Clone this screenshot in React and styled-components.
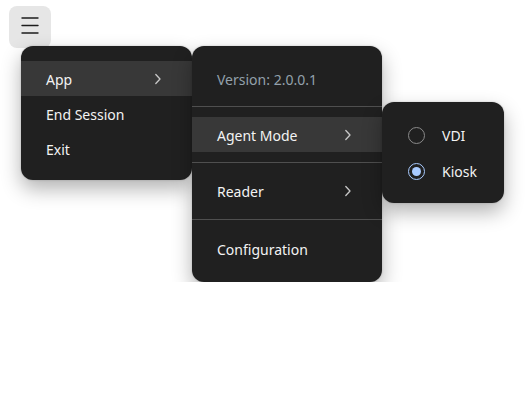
import React from "react";
import styled, { createGlobalStyle } from "styled-components";

const Global = createGlobalStyle`
  html, body { margin: 0; padding: 0; background: #ffffff; }
  body { font-family: "Segoe UI", "Noto Sans", "Open Sans", sans-serif; }
`;

const Page = styled.div`
  padding: 6px 0 0 9px;
  display: flex;
  flex-direction: column;
  align-items: flex-start;
`;

const MenuButton = styled.button`
  width: 42px;
  height: 42px;
  border: none;
  border-radius: 8px;
  background: #e6e6e6;
  display: flex;
  align-items: center;
  justify-content: center;
  padding: 0;
  color: #1a1a1a;
`;

const Cascade = styled.div`
  display: flex;
  align-items: flex-start;
  margin: -2px 0 0 12px;
`;

const Menu = styled.div`
  width: ${(p) => p.$w}px;
  margin-top: ${(p) => p.$top || 0}px;
  background: #202020;
  border-radius: 12px;
  padding: 15px 0 ${(p) => p.$pb || 14}px;
  box-sizing: border-box;
  box-shadow: 0 0 2px rgba(0, 0, 0, 0.22), 0 9px 20px rgba(0, 0, 0, 0.3);
  color: #f3f3f3;
  font-size: 14px;
`;

const Item = styled.div`
  height: ${(p) => p.$h || 35}px;
  box-sizing: border-box;
  padding: 2px 30px 0 25px;
  display: flex;
  align-items: center;
  justify-content: space-between;
  background: ${(p) => (p.$active ? "#383838" : "transparent")};
  color: ${(p) => (p.$muted ? "#93a0ab" : "#f3f3f3")};
  white-space: nowrap;
  svg { margin-top: -2px; }
`;

const Separator = styled.div`
  height: 1px;
  background: #4f4f4f;
  margin: ${(p) => (p.$wide ? "11px 0" : "10px 0")};
`;

const RadioItem = styled.div`
  height: 36px;
  display: flex;
  align-items: center;
  padding-left: 26px;
  gap: 17px;
  color: #f3f3f3;
`;

const Radio = styled.span`
  width: 17px;
  height: 17px;
  box-sizing: border-box;
  border-radius: 50%;
  border: 1.5px solid ${(p) => (p.$checked ? "#a9cbff" : "#8a8a8a")};
  display: flex;
  align-items: center;
  justify-content: center;
  &::after {
    content: "";
    width: 9px;
    height: 9px;
    border-radius: 50%;
    background: ${(p) => (p.$checked ? "#a9cbff" : "transparent")};
  }
`;

const Chevron = () => (
  <svg width="8" height="12" viewBox="0 0 8 12" fill="none">
    <path d="M1.8 1.5 L6 6 L1.8 10.5" stroke="#c8c8c8" strokeWidth="1.3" strokeLinecap="round" strokeLinejoin="round" />
  </svg>
);

const Hamburger = () => (
  <svg width="18" height="20" viewBox="0 0 18 20" fill="none">
    <path d="M1 1 H17 M1 8.5 H17 M1 16 H17" stroke="#1c1c1c" strokeWidth="1.4" strokeLinecap="round" />
  </svg>
);

export default function App() {
  return (
    <>
      <Global />
      <Page>
        <MenuButton aria-label="Menu">
          <Hamburger />
        </MenuButton>
        <Cascade>
          <Menu $w={171}>
            <Item $active>
              App <Chevron />
            </Item>
            <Item>End Session</Item>
            <Item>Exit</Item>
          </Menu>
          <Menu $w={190} $pb={16}>
            <Item $muted>Version: 2.0.0.1</Item>
            <Separator />
            <Item $active>
              Agent Mode <Chevron />
            </Item>
            <Separator />
            <Item>
              Reader <Chevron />
            </Item>
            <Separator $wide />
            <Item>Configuration</Item>
          </Menu>
          <Menu $w={122} $top={56}>
            <RadioItem>
              <Radio />
              VDI
            </RadioItem>
            <RadioItem>
              <Radio $checked />
              Kiosk
            </RadioItem>
          </Menu>
        </Cascade>
      </Page>
    </>
  );
}
